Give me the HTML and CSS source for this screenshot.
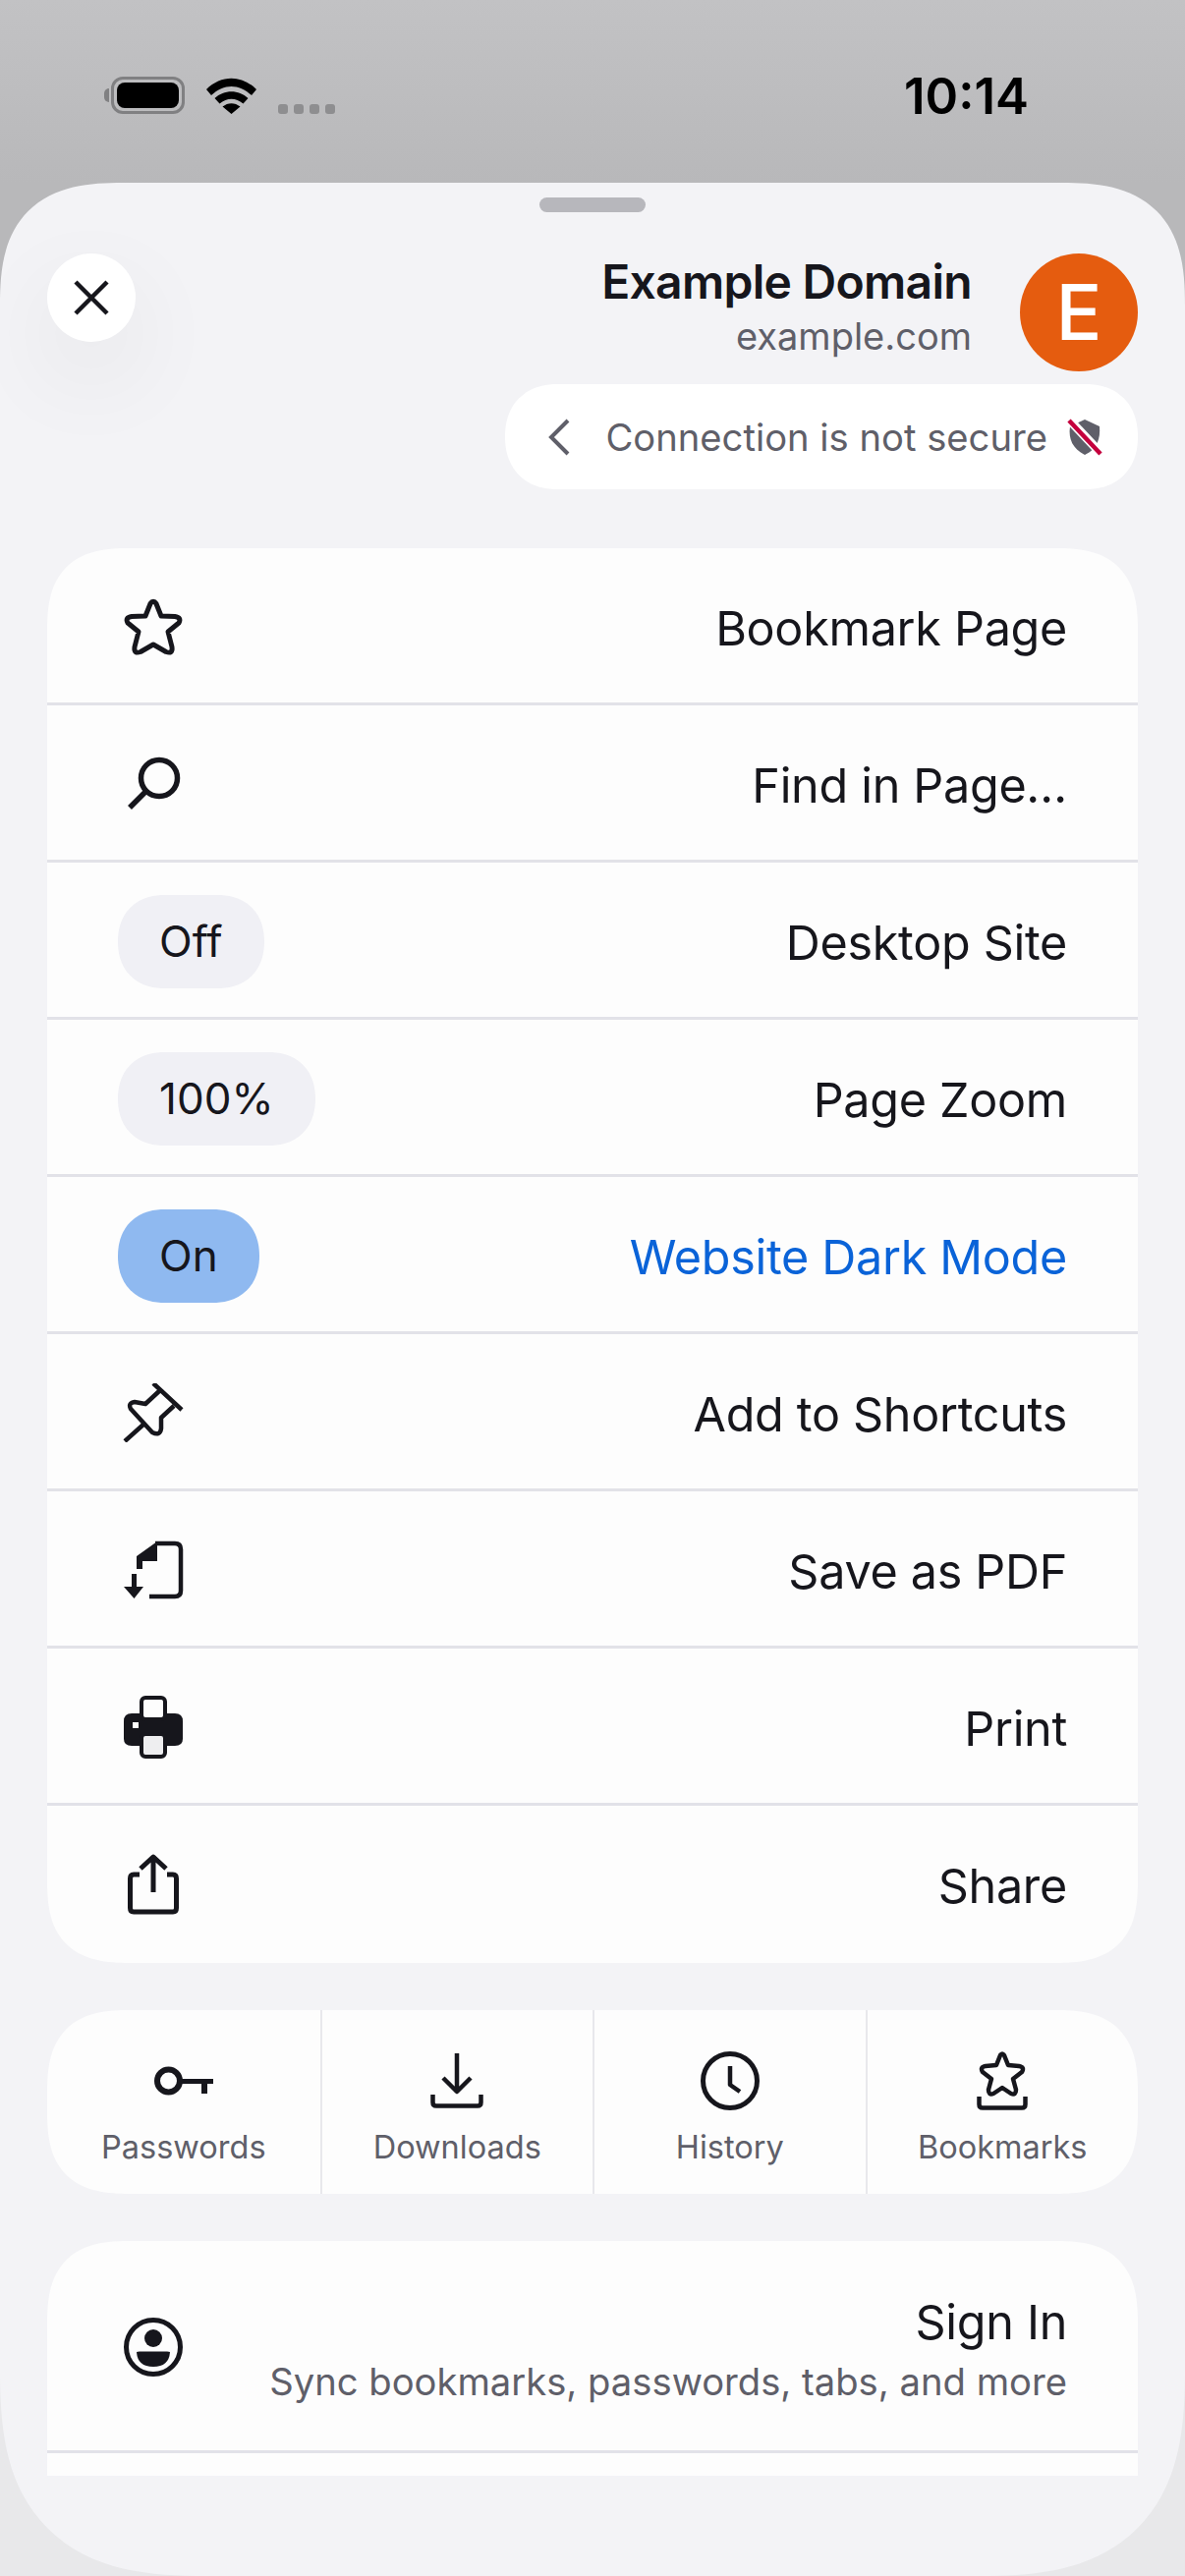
FILE: index.html
```html
<!DOCTYPE html>
<html lang="en">
<head>
<meta charset="utf-8">
<title>Example Domain</title>
<link rel="stylesheet" href="styles.css">
</head>
<body>
<div class="screen">
  <header class="status">
    <div class="status-left">
      <span class="battery"><span class="battery-nub"></span><span class="battery-level"></span></span>
      <svg class="wifi" width="51" height="37" viewBox="0 0 51 37"><path d="M0 12 C15 -3 36 -3 51 12 L46 18 C33 6 18 6 5 18Z M8.500 21 C18 12 33 12 42.500 21 L37.500 26.500 C30 20 21 20 13.500 26.500Z M16.500 29.500 C22 25 29 25 34.500 29.500 L25.500 37Z"/></svg>
      <span class="signal"><i></i><i></i><i></i><i></i></span>
    </div>
    <time class="clock">10:14</time>
  </header>

  <main class="sheet">
    <div class="handle"></div>
    <section class="site">
      <button class="close" aria-label="Close">
        <svg width="36" height="36" viewBox="0 0 36 36"><path d="M2 2 L34 34 M34 2 L2 34" class="stroke" stroke-width="4.500"/></svg>
      </button>
      <div class="site-id">
        <div class="site-text">
          <div class="site-title">Example Domain</div>
          <div class="site-host">example.com</div>
        </div>
        <div class="avatar">E</div>
      </div>
    </section>
    <div class="security-row">
      <div class="security">
        <svg width="22" height="38" viewBox="0 0 22 38"><path d="M20 2 L3 19 L20 36" class="stroke muted" stroke-width="4"/></svg>
        <span class="security-text">Connection is not secure</span>
        <svg class="shield" width="36" height="38" viewBox="0 0 36 38">
          <path d="M18 1 L33 8 C34 20 31 31 18 37 C6 31 1 21 3 8Z" fill="#5f5f69"/>
          <path d="M2 1 L35 36" stroke="#fff" stroke-width="9"/>
          <path d="M2 2 L34 36" stroke="#c4003d" stroke-width="4.500"/>
        </svg>
      </div>
    </div>

    <div class="scroller">
      <section class="card">
        <div class="row">
          <svg class="icon" width="60" height="60" viewBox="0 -1 60 60"><path class="stroke" stroke-width="5" d="M27 5.500 Q30 1 33 5.500 L38 18 L52 18.500 Q59 19.500 56 25 L45 34 L49 49.500 Q50 57 43 54.500 L30 47 L17 54.500 Q10 57 11 49.500 L15 34 L4 25 Q1 19.500 8 18.500 L22 18Z"/></svg>
          <span class="label">Bookmark Page</span>
        </div>
        <div class="row">
          <svg class="icon" width="60" height="60" viewBox="0 0 60 60"><circle class="stroke" cx="36" cy="24" r="18.500" stroke-width="5.500"/><path class="stroke" stroke-width="5.500" d="M23 37 L6 54"/></svg>
          <span class="label">Find in Page…</span>
        </div>
        <div class="row">
          <span class="chip">Off</span>
          <span class="label">Desktop Site</span>
        </div>
        <div class="row">
          <span class="chip">100%</span>
          <span class="label">Page Zoom</span>
        </div>
        <div class="row">
          <span class="chip chip-on">On</span>
          <span class="label label-on">Website Dark Mode</span>
        </div>
        <div class="row">
          <svg class="icon" width="60" height="60" viewBox="0 0 60 60"><path class="stroke" stroke-width="4.500" d="M30 0 L59 27 M36 8 L22 21 L11 19 Q4 20 7 26 L29 50 Q37 54 38 46 L38 35 L51 23 M1 59 L21 41"/></svg>
          <span class="label">Add to Shortcuts</span>
        </div>
        <div class="row">
          <svg class="icon" width="60" height="60" viewBox="0 0 60 60"><path class="stroke" stroke-width="4.500" d="M32 3 H52 Q58 3 58 9 V51 Q58 57 52 57 H26"/><path class="fill" d="M13 16 L34 1 V21 H19 V29 H13Z"/><path class="fill" d="M8 34 H13 V47 H20 L10.500 59 L0 47 H8Z"/></svg>
          <span class="label">Save as PDF</span>
        </div>
        <div class="row">
          <svg class="icon" width="60" height="64" viewBox="0 0 60 64">
            <path class="fill" d="M8 18 H52 Q60 18 60 26 V44 Q60 51 52 51 H8 Q0 51 0 44 V26 Q0 18 8 18Z"/>
            <rect x="9" y="27" width="6" height="6" fill="#fff"/>
            <rect x="18" y="2" width="24" height="22" rx="4" class="stroke paper" stroke-width="4"/>
            <rect x="18" y="39" width="24" height="23" rx="4" class="stroke paper-out" stroke-width="4"/>
          </svg>
          <span class="label">Print</span>
        </div>
        <div class="row row-last">
          <svg class="icon" width="60" height="62" viewBox="0 0 60 62"><path class="stroke" stroke-width="5" d="M16 21 H10 Q6.500 21 6.500 25 V55 Q6.500 59 10 59 H50 Q53.500 59 53.500 55 V25 Q53.500 21 50 21 H44 M30 39 V4 M17 15 L30 3 L43 15"/></svg>
          <span class="label">Share</span>
        </div>
      </section>

      <section class="card quick">
        <div class="quick-item">
          <span class="quick-slot"><svg width="60" height="30" viewBox="0 0 60 30"><circle class="stroke" cx="14.500" cy="15" r="11.500" stroke-width="6"/><path class="fill" d="M26 13 H60 V18 H54 V28 H48 V18 H26Z"/></svg></span>
          <span class="quick-label">Passwords</span>
        </div>
        <div class="quick-item">
          <span class="quick-slot"><svg width="54" height="56" viewBox="0 0 54 56"><path class="stroke" stroke-width="4.500" d="M27 0 V38 M13 25 L27 39 L41 25"/><path class="stroke" stroke-width="4.500" d="M2.500 42 V50 Q2.500 53.500 6 53.500 H48 Q51.500 53.500 51.500 50 V42"/></svg></span>
          <span class="quick-label">Downloads</span>
        </div>
        <div class="quick-item">
          <span class="quick-slot"><svg width="60" height="60" viewBox="0 0 60 60"><circle class="stroke" cx="30" cy="30" r="27.500" stroke-width="5"/><path class="stroke" stroke-width="4.500" d="M30 15 V34 L40 41"/></svg></span>
          <span class="quick-label">History</span>
        </div>
        <div class="quick-item">
          <span class="quick-slot"><svg width="52" height="60" viewBox="0 0 52 60"><path class="stroke" stroke-width="4.500" d="M24 4 Q26 1 28 4 L32 14 L43 15 Q49 16 46 21 L37 28 L40 39 Q40 45 35 43 L26 37 L17 43 Q12 45 12 39 L15 28 L6 21 Q3 16 9 15 L20 14Z"/><path class="stroke" stroke-width="4.500" d="M2.500 46 V54 Q2.500 57.500 6 57.500 H46 Q49.500 57.500 49.500 54 V46"/></svg></span>
          <span class="quick-label">Bookmarks</span>
        </div>
      </section>

      <section class="card account">
        <div class="row row-account">
          <svg class="icon" width="60" height="60" viewBox="0 0 60 60"><circle class="stroke" cx="30" cy="30" r="27.500" stroke-width="5"/><circle class="fill" cx="30" cy="21" r="9"/><path class="fill" d="M13 35 Q14 34.500 16 34.500 H44 Q46 34.500 47 35 Q46 50 30 50 Q14 50 13 35Z"/></svg>
          <div class="account-text">
            <div class="label">Sign In</div>
            <div class="sublabel">Sync bookmarks, passwords, tabs, and more</div>
          </div>
        </div>
        <div class="row row-last"></div>
      </section>
    </div>
  </main>
</div>
</body>
</html>
```
FILE: styles.css
```css
* { box-sizing: border-box; }

html, body { margin: 0; padding: 0; }

body {
  font-family: Inter, "Liberation Sans", sans-serif;
  color: #16161c;
}

.screen {
  width: 1206px;
  height: 2622px;
  display: flex;
  flex-direction: column;
  overflow: hidden;
  background: linear-gradient(180deg, #c2c2c4 0, #b8b8ba 186px, #b8b8ba 260px, #e8e8ea 2400px);
}

/* status bar */
.status {
  height: 186px;
  flex: none;
  padding: 78px 159px 0 106px;
  display: flex;
  justify-content: space-between;
  align-items: flex-start;
}

.status-left { display: flex; align-items: flex-start; }

.battery {
  position: relative;
  width: 75px;
  height: 38px;
  margin-left: 7px;
  border: 3px solid #808082;
  border-radius: 12px;
  padding: 3px;
  display: block;
}

.battery-level {
  display: block;
  width: 100%;
  height: 100%;
  background: #000;
  border-radius: 8px;
}

.battery-nub {
  position: absolute;
  left: -10px;
  top: 9px;
  width: 5px;
  height: 14px;
  background: #808082;
  border-radius: 5px 0 0 5px;
}

.wifi { margin-left: 22px; margin-top: 1px; }

.signal { display: flex; gap: 6px; margin-left: 22px; margin-top: 28px; }

.signal i {
  width: 10px;
  height: 10px;
  background: #8e8e90;
  border-radius: 3px;
  display: block;
}

.clock {
  font-size: 51px;
  line-height: 48px;
  font-weight: 600;
  color: #000;
  margin-top: -4px;
}

/* sheet */
.sheet {
  flex: 1;
  min-height: 0;
  background: #f3f3f6;
  border-radius: 125px 125px 210px 210px;
  corner-shape: superellipse(1.4);
}

.handle {
  width: 108px;
  height: 15px;
  margin: 15px auto 0;
  background: #b7b7bc;
  border-radius: 8px;
}

.site {
  margin-top: 42px;
  padding: 0 48px;
  display: flex;
  justify-content: space-between;
  align-items: flex-start;
}

.close {
  width: 90px;
  height: 90px;
  padding: 0;
  border: 0;
  border-radius: 50%;
  background: #fff;
  box-shadow: 0 36px 100px rgba(0, 0, 0, .07);
  display: flex;
  align-items: center;
  justify-content: center;
}

.site-id { display: flex; gap: 49px; }

.site-text { text-align: right; }

.site-title { font-size: 48px; line-height: 58px; font-weight: 600; letter-spacing: -.7px; }

.site-host { font-size: 38px; line-height: 52px; color: #5f5f69; }

.avatar {
  width: 120px;
  height: 120px;
  border-radius: 50%;
  background: #e55c0f;
  color: #fff;
  font-size: 78px;
  font-weight: 500;
  line-height: 120px;
  text-align: center;
}

.security-row {
  margin-top: 13px;
  padding: 0 48px;
  display: flex;
  justify-content: flex-end;
}

.security {
  height: 107px;
  padding: 0 36px 0 44px;
  background: #fff;
  border-radius: 54px;
  corner-shape: superellipse(1.15);
  display: flex;
  align-items: center;
}

.security-text {
  font-size: 38.200px;
  color: #5f5f69;
  margin: 0 20px 0 36px;
}

.scroller {
  height: 1962px;
  margin-top: 60px;
  padding: 0 48px;
  overflow: hidden;
  display: flex;
  flex-direction: column;
  gap: 48px;
}

.card {
  flex: none;
  background: #fdfdfd;
  border-radius: 84px;
  corner-shape: superellipse(1.4);
}

.account { border-radius: 84px 84px 0 0; }

.row {
  height: 160px;
  padding: 3px 72px 0;
  border-bottom: 3px solid #e2e2e8;
  display: flex;
  justify-content: space-between;
  align-items: center;
}

.row-last { border-bottom-color: transparent; }

.icon { width: 72px; flex: none; }

.label { font-size: 48.500px; line-height: 58px; letter-spacing: -.3px; padding-top: 3px; }

.label-on { color: #0a63d8; }

.chip {
  height: 95px;
  padding: 0 42px;
  border-radius: 48px;
  corner-shape: superellipse(1.15);
  background: #f0f0f5;
  font-size: 44px;
  line-height: 95px;
}

.chip-on { background: #8fb9f0; }

.quick {
  height: 187px;
  display: grid;
  grid-template-columns: repeat(4, 1fr);
}

.quick-item {
  display: flex;
  flex-direction: column;
  align-items: center;
  padding-top: 42px;
  border-left: 2px solid #e8e8ec;
}

.quick-item:first-child { border-left: 0; }

.quick-slot {
  height: 60px;
  display: flex;
  align-items: center;
  justify-content: center;
}

.quick-label {
  font-size: 32.500px;
  line-height: 40px;
  margin-top: 18px;
  color: #5f5f69;
}

.row-account { height: 216px; padding-top: 3px; }

.account-text { text-align: right; padding-top: 2px; }

.sublabel { font-size: 38.200px; line-height: 50px; color: #5f5f69; margin-top: 6px; }

/* shared svg paint */
.stroke {
  fill: none;
  stroke: #16161c;
  stroke-linejoin: round;
}

.muted { stroke: #5f5f69; stroke-linejoin: miter; }

.fill { fill: #16161c; }

.paper { fill: #fdfdfd; }

.paper-out { fill: #eeeef0; }
```
